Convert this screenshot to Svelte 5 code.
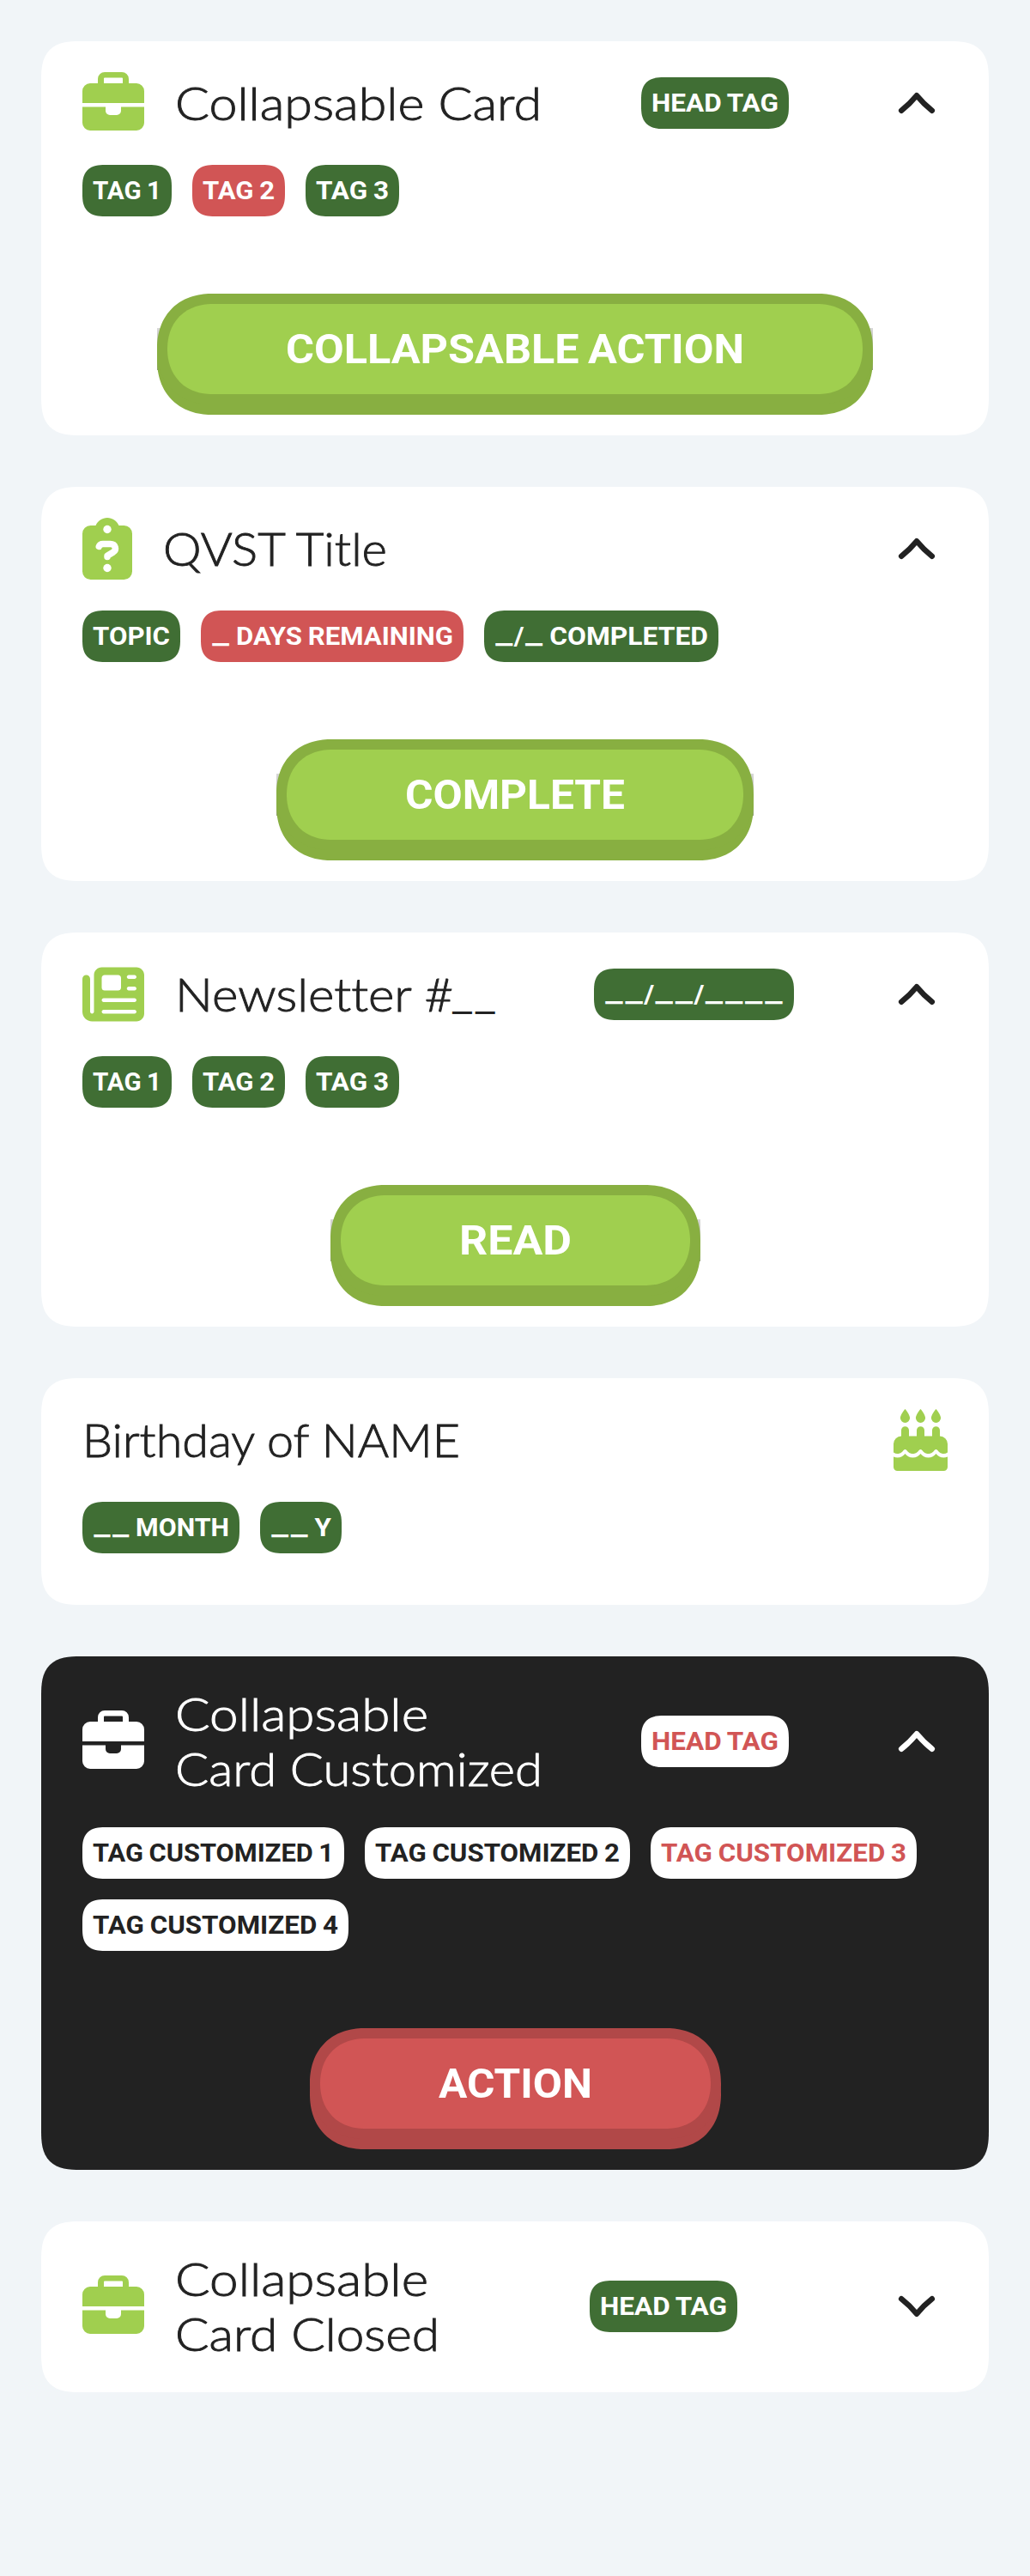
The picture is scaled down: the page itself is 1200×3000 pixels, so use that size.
<script>
  const cards = [
    {
      icon: 'briefcase',
      title: [['Collapsable Card', 427]],
      head: ['HEAD TAG', 148],
      toggle: 'up',
      tags: [['TAG 1', 80], ['TAG 2', 84, 'red'], ['TAG 3', 85]],
      action: ['COLLAPSABLE ACTION', 534]
    },
    {
      icon: 'clipboard',
      title: [['QVST Title', 261]],
      toggle: 'up',
      tags: [['TOPIC', 90], ['_ DAYS REMAINING', 282, 'red'], ['_/_ COMPLETED', 249]],
      action: ['COMPLETE', 256]
    },
    {
      icon: 'newspaper',
      title: [['Newsletter #__', 378]],
      head: ['__/__/____', 209],
      toggle: 'up',
      tags: [['TAG 1', 80], ['TAG 2', 84], ['TAG 3', 85]],
      action: ['READ', 131]
    },
    {
      title: [['Birthday of NAME', 440]],
      toggle: 'cake',
      tags: [['__ MONTH', 159], ['__ Y', 71]],
      spaced: true
    },
    {
      theme: 'dark',
      icon: 'briefcase',
      title: [['Collapsable', 295], ['Card Customized', 428]],
      head: ['HEAD TAG', 148, 'warn'],
      toggle: 'up',
      tags: [
        ['TAG CUSTOMIZED 1', 281],
        ['TAG CUSTOMIZED 2', 285],
        ['TAG CUSTOMIZED 3', 286, 'warn'],
        ['TAG CUSTOMIZED 4', 286]
      ],
      action: ['ACTION', 179]
    },
    {
      icon: 'briefcase',
      title: [['Collapsable', 295], ['Card Closed', 308]],
      head: ['HEAD TAG', 148],
      toggle: 'down'
    }
  ];

  // Widens the letterforms so a label takes exactly the given width.
  function fit(node, width) {
    const text = node.firstElementChild;
    const natural = text.getBoundingClientRect().width;
    node.style.width = `${width}px`;
    text.style.transform = `scaleX(${width / natural})`;
  }
</script>

{#snippet label(text, width)}
  <span class="label" use:fit={width}><span class="text">{#each text.split(/(_)/).filter(Boolean) as part}{#if part === '_'}<span class="blank">_</span>{:else}{part}{/if}{/each}</span></span>
{/snippet}

{#snippet tag(item)}
  <span class="tag {item[2] ?? ''}">{@render label(item[0], item[1])}</span>
{/snippet}

<main>
  {#each cards as card}
    <section class="card {card.theme ?? ''}">
      <header>
        <div class="lead">
          {#if card.icon === 'briefcase'}
            <svg class="icon" width="72" height="72" viewBox="0 0 72 72">
              <path fill-rule="evenodd" d="M18 13V8a8 8 0 0 1 8-8h20a8 8 0 0 1 8 8v5h9a9 9 0 0 1 9 9v14H0V22a9 9 0 0 1 9-9zM25 13h22V7.5a1 1 0 0 0-1-1H26a1 1 0 0 0-1 1z" />
              <path d="M0 40.5h27V45a5 5 0 0 0 5 5h8a5 5 0 0 0 5-5v-4.500h27V59a9 9 0 0 1-9 9H9a9 9 0 0 1-9-9z" />
            </svg>
          {:else if card.icon === 'clipboard'}
            <svg class="icon" width="58" height="72" viewBox="0 0 58 72">
              <path d="M9.500 9H15.500C18 3.500 23 0 29 0S40 3.500 42.500 9H48.500A9.500 9.500 0 0 1 58 18.500V62.500A9.500 9.500 0 0 1 48.500 72H9.500A9.500 9.500 0 0 1 0 62.500V18.500A9.500 9.500 0 0 1 9.500 9Z" />
              <circle class="hole" cx="29" cy="13.500" r="4.700" />
              <path class="question" d="M19.300 33.500C20 31.300 21.700 30.500 24 30.500H32.500C38.700 30.500 40.200 37.200 36 40L29 44.200V45.600" />
              <circle class="hole" cx="29" cy="58.500" r="4.700" />
            </svg>
          {:else if card.icon === 'newspaper'}
            <svg class="icon" width="72" height="72" viewBox="0 0 512 512">
              <path d="M96 96c0-35.300 28.700-64 64-64H448c35.300 0 64 28.700 64 64V416c0 35.300-28.700 64-64 64H80c-44.200 0-80-35.800-80-80V128c0-17.700 14.300-32 32-32s32 14.300 32 32V400c0 8.800 7.200 16 16 16s16-7.200 16-16V96zm64 24v80c0 13.300 10.700 24 24 24H296c13.300 0 24-10.700 24-24V120c0-13.300-10.700-24-24-24H184c-13.300 0-24 10.700-24 24zm208-8c0 8.800 7.200 16 16 16h48c8.800 0 16-7.200 16-16s-7.200-16-16-16H384c-8.800 0-16 7.200-16 16zm0 96c0 8.800 7.200 16 16 16h48c8.800 0 16-7.200 16-16s-7.200-16-16-16H384c-8.800 0-16 7.200-16 16zM160 304c0 8.800 7.200 16 16 16H432c8.800 0 16-7.200 16-16s-7.200-16-16-16H176c-8.800 0-16 7.200-16 16zm0 96c0 8.800 7.200 16 16 16H432c8.800 0 16-7.200 16-16s-7.200-16-16-16H176c-8.800 0-16 7.200-16 16z" />
            </svg>
          {/if}
          <h2>
            {#each card.title as line}
              <span class="line">{@render label(line[0], line[1])}</span>
            {/each}
          </h2>
        </div>

        {#if card.head}{@render tag(card.head)}{/if}

        {#if card.toggle === 'cake'}
          <svg class="icon" width="63" height="72" viewBox="0 0 63 72">
            {#each [13.5, 31.5, 49.5] as x}
              <path transform="translate({x} 0)" d="M0 0C1 .6 5.600 7 5.600 10.300A5.600 5.600 0 0 1-5.600 10.300C-5.600 7-1 .6 0 0ZM-4.500 34V24.700a4.500 4.500 0 0 1 9 0V34Z" />
            {/each}
            <path d="M9 31.500H54A9 9 0 0 1 63 40.500V50.500C61.500 51.500 60 52 58.500 52C54.500 52 52.500 49.500 51.300 48A2.400 2.400 0 0 0 47.700 48C46.500 49.500 44.500 52 40.500 52S34.500 49.500 33.300 48A2.400 2.400 0 0 0 29.700 48C28.500 49.500 26.500 52 22.500 52S16.500 49.500 15.300 48A2.400 2.400 0 0 0 11.700 48C10.500 49.500 8.500 52 4.500 52C3 52 1.500 51.500 0 50.500V40.500A9 9 0 0 1 9 31.500Z" />
            <path d="M0 55.500C1.500 56.200 3 56.500 4.500 56.500C8.500 56.500 11.500 54.500 13.500 52C15.500 54.500 18.500 56.500 22.500 56.500S29.500 54.500 31.500 52C33.500 54.500 36.500 56.500 40.500 56.500S47.500 54.500 49.500 52C51.500 54.500 54.500 56.500 58.500 56.500C60 56.500 61.500 56.200 63 55.500V67.500A4.500 4.500 0 0 1 58.500 72H4.500A4.500 4.500 0 0 1 0 67.500Z" />
          </svg>
        {:else}
          <svg class="chevron" class:down={card.toggle === 'down'} width="72" height="72" viewBox="0 0 72 72">
            <path d="M18.200 44.700Q28 37 36 27.300Q44 37 53.800 44.700" />
          </svg>
        {/if}
      </header>

      {#if card.tags}
        <div class="tags" class:spaced={card.spaced}>
          {#each card.tags as item}{@render tag(item)}{/each}
        </div>
      {/if}

      {#if card.action}
        <button>{@render label(card.action[0], card.action[1])}</button>
      {/if}
    </section>
  {/each}
</main>

<style>
  :global(body) {
    margin: 0;
    background: #f1f5f8;
  }

  main {
    box-sizing: border-box;
    min-height: 3000px;
    padding: 48px;
    display: flex;
    flex-direction: column;
    gap: 60px;
    background: #f1f5f8;
    font-family: Roboto, 'Liberation Sans', sans-serif;
  }

  .card {
    display: flex;
    flex-direction: column;
    isolation: isolate;
    padding: 0 48px;
    border-radius: 39px;
    background: #fff;
    color: #222;
  }

  header {
    display: flex;
    align-items: center;
    justify-content: space-between;
    min-height: 72px;
    padding: 36px 0;
  }

  .lead {
    display: flex;
    align-items: center;
    gap: 36px;
  }

  svg {
    display: block;
    flex: none;
  }

  .icon {
    fill: #a0cf4f;
  }

  .icon .hole {
    fill: #fff;
  }

  .icon .question {
    fill: none;
    stroke: #fff;
    stroke-width: 7.5;
    stroke-linecap: round;
    stroke-linejoin: round;
  }

  .chevron {
    fill: none;
    stroke: currentColor;
    stroke-width: 6.5;
    stroke-linecap: round;
    stroke-linejoin: round;
  }

  .chevron.down {
    transform: rotate(180deg);
  }

  h2 {
    margin: -0.6px 0;
    padding-right: 2px;
    font: 300 54px/64px Lato, sans-serif;
    font-variant-ligatures: none;
    -webkit-text-stroke: 0.9px currentColor;
  }

  .line {
    display: block;
    height: 64px;
  }

  .label {
    display: inline-block;
    white-space: nowrap;
    text-align: left;
  }

  .text {
    display: inline-block;
    transform-origin: 0 50%;
  }

  .blank {
    display: inline-block;
    width: 21.5px;
    font: 700 29px/1 'Liberation Sans', sans-serif;
    line-height: 0;
    text-align: center;
    vertical-align: 3px;
    -webkit-text-stroke: 2.2px currentColor;
  }

  h2 .blank {
    width: 25px;
    font-size: 34px;
    text-align: left;
    vertical-align: 2px;
    -webkit-text-stroke-width: 1.8px;
  }

  .tags {
    display: flex;
    flex-wrap: wrap;
    gap: 24px;
    padding-bottom: 90px;
  }

  .tags.spaced {
    padding-bottom: 60px;
  }

  .tag {
    display: block;
    flex: none;
    height: 60px;
    padding: 0 12px;
    border-radius: 21px;
    background: #406e34;
    color: #fff;
    font-size: 30px;
    font-weight: 700;
    line-height: 60px;
    word-spacing: -1px;
  }

  .tag.red {
    background: #d15555;
  }

  button {
    position: relative;
    align-self: center;
    height: 129px;
    margin: 0 0 36px;
    padding: 0 138px;
    border: 12px solid #88af41;
    border-radius: 62px;
    box-shadow: 0 12px 0 #88af41;
    background: #a0cf4f;
    color: #fff;
    font: 700 48px/105px Roboto, sans-serif;
    word-spacing: -2px;
  }

  /* Hard-edged shade peeking out at both ends of the button */
  button::before {
    content: '';
    position: absolute;
    z-index: -1;
    top: 28px;
    left: -12px;
    right: -12px;
    height: 49px;
    background: linear-gradient(#d8d8d8, #8f9a7c);
  }

  .dark button::before {
    display: none;
  }

  .dark {
    background: #222;
    color: #fff;
  }

  .dark .icon {
    fill: #fff;
  }

  .dark .tag {
    background: #fff;
    color: #222;
  }

  .dark .tag.warn {
    color: #d15555;
  }

  .dark button {
    border-color: #b14848;
    box-shadow: 0 12px 0 #b14848;
    background: #d15555;
  }

  /* Continuous corners where the engine can draw them */
  @supports (corner-shape: superellipse(1.5)) {
    .card {
      border-radius: 46px;
      corner-shape: superellipse(1.5);
    }

    .tag {
      border-radius: 26px;
      corner-shape: superellipse(1.4);
    }

    button {
      border-radius: 66px;
      corner-shape: superellipse(1.15);
    }
  }
</style>
